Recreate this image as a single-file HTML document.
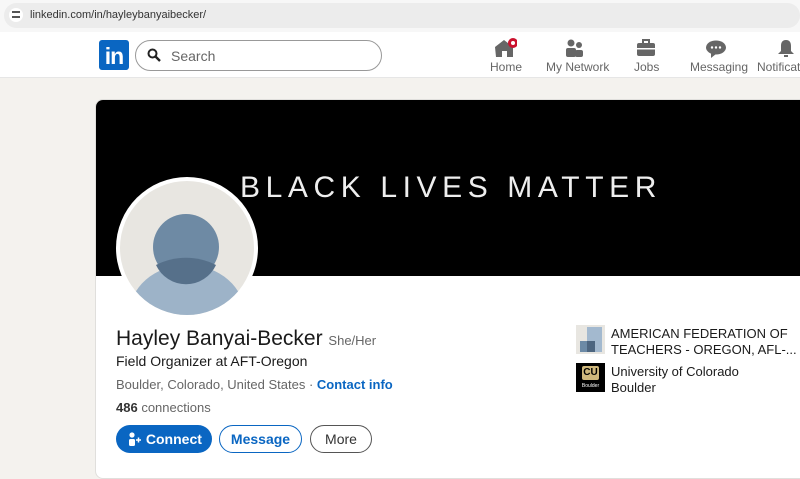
<!DOCTYPE html>
<html><head><style>
*{margin:0;padding:0;box-sizing:border-box}
body{width:800px;height:472px;overflow:hidden;background:#f4f2ee;font-family:"Liberation Sans",sans-serif;position:relative}
.abs{position:absolute}
.nav .it{position:absolute;top:60px;font-size:12px;color:#666;white-space:nowrap}
</style></head><body>
<div class="abs" style="left:0;top:0;width:800px;height:32px;background:#f7f7f7"></div>
<div class="abs" style="left:4px;top:3px;width:796px;height:25px;background:#ececec;border-radius:13px"></div>
<div class="abs" style="left:9px;top:8px;width:14px;height:14px;border-radius:7px;background:#fff"></div>
<div class="abs" style="left:12px;top:11px;width:8px;height:2px;background:#555"></div>
<div class="abs" style="left:12px;top:16px;width:8px;height:2px;background:#555"></div>
<div class="abs" style="left:30px;top:9px;font-size:11px;color:#333">linkedin.com/in/hayleybanyaibecker/</div>
<div class="abs" style="left:0;top:32px;width:800px;height:46px;background:#fff;border-bottom:1px solid #e6e6e6"></div>
<div class="abs" style="left:99px;top:40px;width:30px;height:30px;background:#0a66c2;border-radius:3px;color:#fff;font-weight:bold;font-size:23px;line-height:32px;text-align:center;letter-spacing:-1px">in</div>
<div class="abs" style="left:135px;top:40px;width:247px;height:31px;border:1px solid #999;border-radius:16px"></div>
<svg class="abs" style="left:147px;top:48px" width="14" height="14" viewBox="0 0 14 14"><circle cx="5.5" cy="5.5" r="4" fill="none" stroke="#222" stroke-width="2"/><path d="M8.5 8.5L13 13" stroke="#222" stroke-width="2.4"/></svg>
<div class="abs" style="left:171px;top:48px;font-size:14px;color:#666">Search</div>
<div class="nav">
<svg class="abs" style="left:493px;top:38px" width="24" height="20" viewBox="0 0 24 20"><path d="M2 9L11 2L20 9V19H14V13H9V19H3Z" fill="#666"/><circle cx="20" cy="5" r="5" fill="#cb112d"/><circle cx="20" cy="5" r="2" fill="#fff"/></svg>
<div class="it" style="left:490px">Home</div>
<svg class="abs" style="left:565px;top:39px" width="20" height="18"><circle cx="6" cy="4" r="3.5" fill="#666"/><circle cx="14" cy="6" r="3" fill="#666"/><rect x="1" y="9" width="10" height="9" rx="2" fill="#666"/><rect x="10" y="11" width="8" height="7" rx="2" fill="#666"/></svg>
<div class="it" style="left:546px">My Network</div>
<svg class="abs" style="left:636px;top:39px" width="20" height="18"><rect x="7" y="1" width="6" height="4" fill="none" stroke="#666" stroke-width="2"/><rect x="1" y="4" width="18" height="13" rx="2" fill="#666"/><rect x="1" y="9" width="18" height="1.5" fill="#fff"/></svg>
<div class="it" style="left:634px">Jobs</div>
<svg class="abs" style="left:705px;top:40px" width="22" height="19"><ellipse cx="11" cy="7.5" rx="10" ry="7" fill="#666"/><path d="M6 13L6 18L11 14Z" fill="#666"/><circle cx="7" cy="7.5" r="1.2" fill="#fff"/><circle cx="11" cy="7.5" r="1.2" fill="#fff"/><circle cx="15" cy="7.5" r="1.2" fill="#fff"/></svg>
<div class="it" style="left:690px">Messaging</div>
<svg class="abs" style="left:776px;top:38px" width="20" height="20"><path d="M10 2C6 2 5 5 5 8V13L2 16H18L15 13V8C15 5 14 2 10 2Z" fill="#666"/><rect x="8" y="17" width="4" height="2" fill="#666"/></svg>
<div class="it" style="left:757px">Notifications</div>
</div>
<div class="abs" style="left:95px;top:99px;width:720px;height:380px;background:#fff;border-radius:8px;overflow:hidden;border:1px solid #e0dfdc">
<div style="height:176px;background:#000"></div>
</div>
<div class="abs" style="left:240px;top:171px;font-size:30px;color:#eee;letter-spacing:5.6px;white-space:nowrap">BLACK LIVES MATTER</div>
<div class="abs" style="left:116px;top:177px;width:142px;height:142px;border-radius:50%;background:#fff"></div>
<svg class="abs" style="left:120px;top:181px" width="134" height="134" viewBox="0 0 134 134"><defs><clipPath id="c"><circle cx="67" cy="67" r="67"/></clipPath></defs><g clip-path="url(#c)"><rect width="134" height="134" fill="#e8e6e1"/><ellipse cx="67" cy="134" rx="58" ry="50" fill="#9db3c8"/><circle cx="66" cy="66" r="33" fill="#6e8aa4"/><path d="M36 84A33 33 0 0 0 96 84A58 50 0 0 0 36 84Z" fill="#56708a"/></g></svg>
<div class="abs" style="left:116px;top:327px;font-size:21px;color:#1a1a1a;white-space:nowrap">Hayley Banyai-Becker <span style="font-size:13px;color:#666">She/Her</span></div>
<div class="abs" style="left:116px;top:353px;font-size:14px;color:#1a1a1a">Field Organizer at AFT-Oregon</div>
<div class="abs" style="left:116px;top:377px;font-size:13px;color:#666;white-space:nowrap">Boulder, Colorado, United States · <span style="color:#0a66c2;font-weight:bold">Contact info</span></div>
<div class="abs" style="left:116px;top:400px;font-size:13px;color:#666"><span style="color:#333;font-weight:bold">486</span> connections</div>
<div class="abs" style="left:116px;top:425px;width:96px;height:28px;border-radius:14px;background:#0a66c2;color:#fff;font-weight:bold;font-size:14px;line-height:28px;padding-left:12px">
<svg style="vertical-align:-2px" width="14" height="14"><circle cx="4" cy="3" r="2.6" fill="#fff"/><rect x="1" y="7" width="6" height="7" rx="1.5" fill="#fff"/><path d="M8 8h5M10.5 5.5v5" stroke="#fff" stroke-width="1.5"/></svg> Connect</div>
<div class="abs" style="left:219px;top:425px;width:83px;height:28px;border-radius:14px;border:1px solid #0a66c2;color:#0a66c2;font-weight:bold;font-size:14px;line-height:26px;text-align:center">Message</div>
<div class="abs" style="left:310px;top:425px;width:62px;height:28px;border-radius:14px;border:1px solid #555;color:#333;font-size:14px;line-height:26px;text-align:center">More</div>
<svg class="abs" style="left:576px;top:325px" width="29" height="29"><rect width="29" height="29" fill="#e8e6e1"/><rect x="11" y="2" width="15" height="25" fill="#a3b9cf"/><rect x="4" y="16" width="15" height="11" fill="#6c8aa6"/><rect x="11" y="16" width="8" height="11" fill="#4d6680"/></svg>
<div class="abs" style="left:611px;top:326px;font-size:13px;color:#1a1a1a;line-height:16px;white-space:nowrap">AMERICAN FEDERATION OF<br>TEACHERS - OREGON, AFL-...</div>
<div class="abs" style="left:576px;top:363px;width:29px;height:29px;background:#000"></div>
<div class="abs" style="left:582px;top:366px;width:17px;height:14px;background:#cfb87c;border-radius:2px;font-size:10px;font-weight:bold;color:#000;text-align:center;line-height:14px">CU</div>
<div class="abs" style="left:577px;top:383px;width:27px;font-size:5px;color:#fff;text-align:center">Boulder</div>
<div class="abs" style="left:611px;top:364px;font-size:13px;color:#1a1a1a;line-height:16px">University of Colorado<br>Boulder</div>
</body></html>
